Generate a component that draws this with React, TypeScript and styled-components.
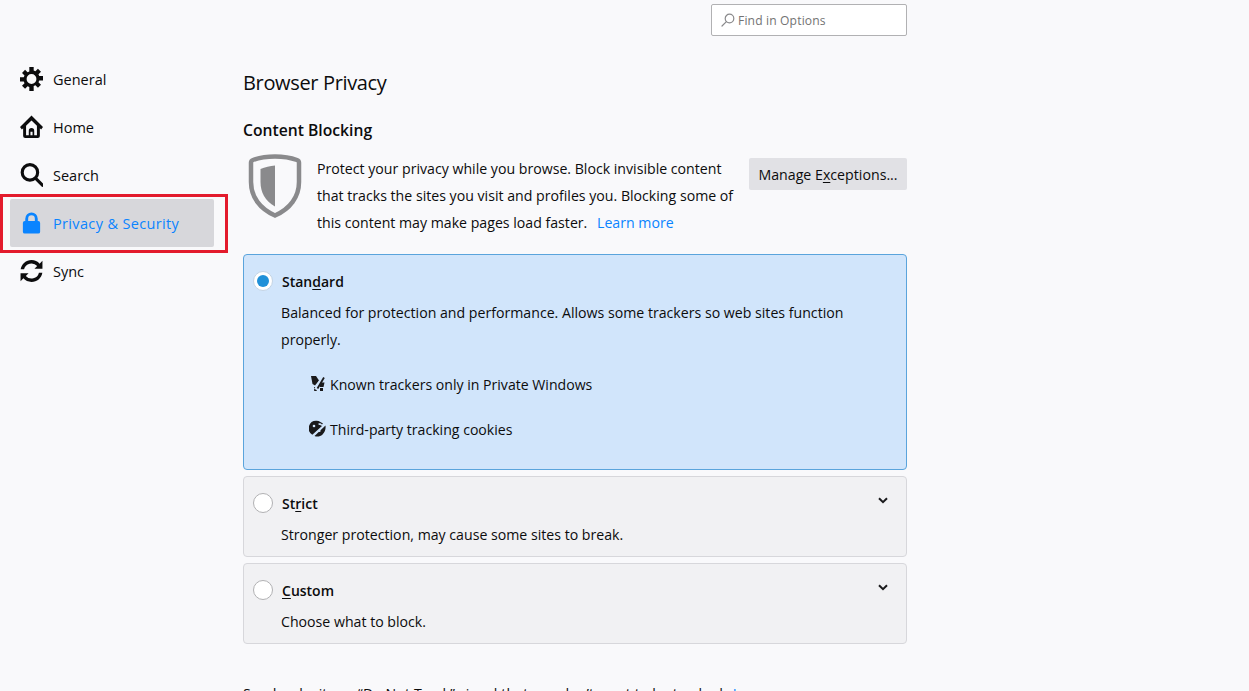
import React from "react";
import styled, { createGlobalStyle } from "styled-components";

const Global = createGlobalStyle`
  html, body { margin: 0; padding: 0; height: 691px; overflow: hidden; background: #f9f9fb; }
  body { font-family: "Open Sans", "Noto Sans", sans-serif; font-size: 14px; color: #0c0c0d; }
  u { text-underline-offset: 2px; }
`;

const Page = styled.div`
  position: relative;
  display: flex;
  height: 691px;
  overflow: hidden;
`;
const Sidebar = styled.nav`
  width: 243px;
  flex: none;
  padding: 55px 0 0 10px;
  box-sizing: border-box;
`;
const NavItem = styled.div<{ $active?: boolean }>`
  width: 204px;
  height: 48px;
  box-sizing: border-box;
  padding-left: 10px;
  display: flex;
  align-items: center;
  gap: 10px;
  border-radius: 2px;
  font-size: 14.5px;
  letter-spacing: ${(p) => (p.$active ? "0.35px" : "0")};
  background: ${(p) => (p.$active ? "#d7d7db" : "transparent")};
  color: ${(p) => (p.$active ? "#0a84ff" : "#0c0c0d")};
  & > svg { width: 23px; height: 24px; flex: none; }
`;
const Highlight = styled.div`
  position: absolute;
  left: 0;
  top: 194px;
  width: 228px;
  height: 59px;
  box-sizing: border-box;
  border: 3px solid #e31b2c;
  pointer-events: none;
`;
const Main = styled.main`
  width: 664px;
  flex: none;
  padding-top: 4px;
`;
const SearchRow = styled.div`
  display: flex;
  justify-content: flex-end;
`;
const SearchBox = styled.div`
  width: 196px;
  height: 32px;
  box-sizing: border-box;
  border: 1px solid #b1b1b3;
  border-radius: 2px;
  background: #fff;
  display: flex;
  align-items: center;
  gap: 3px;
  padding-left: 9px;
  font-size: 12.1px;
  color: #737373;
  letter-spacing: 0.15px;
`;
const Title = styled.h1`
  margin: 27px 0 0;
  font-size: 20px;
  line-height: 40px;
  font-weight: 400;
  letter-spacing: -0.35px;
  color: #0c0c0d;
`;
const Subtitle = styled.h2`
  margin: 15px 0 0;
  font-size: 15.7px;
  line-height: 24px;
  font-weight: 600;
`;
const Intro = styled.div`
  display: flex;
  margin-top: 8px;
  height: 94px;
`;
const ShieldWrap = styled.div`
  width: 74px;
  padding: 4px 0 0 5px;
  box-sizing: border-box;
  flex: none;
`;
const IntroText = styled.p`
  margin: 0;
  width: 420px;
  flex: none;
  line-height: 27px;
  font-size: 14.15px;
  padding-top: 5px;
`;
const Link = styled.a`
  color: #0a84ff;
  margin-left: 6px;
`;
const ManageBtn = styled.button`
  margin: 8px 0 0 auto;
  width: 158px;
  height: 32px;
  border: 0;
  border-radius: 2px;
  background: #e1e1e5;
  color: #0c0c0d;
  font: 400 14.2px "Open Sans", sans-serif;
  padding: 0;
  white-space: nowrap;
`;
const Card = styled.section<{ $selected?: boolean; $h: number }>`
  position: relative;
  height: ${(p) => p.$h}px;
  box-sizing: border-box;
  margin-bottom: 6px;
  border-radius: 4px;
  border: 1px solid ${(p) => (p.$selected ? "#5aa4dc" : "#d7d7db")};
  background: ${(p) => (p.$selected ? "#d1e5fb" : "#f1f1f3")};
  padding: 13px 9px 0;
`;
const CardsWrap = styled.div`
  margin-top: 10px;
`;
const CardHead = styled.div`
  display: flex;
  align-items: center;
  gap: 9px;
  height: 26px;
  font-weight: 600;
  font-size: 14px;
`;
const Radio = styled.span<{ $on?: boolean }>`
  width: 20px;
  height: 20px;
  box-sizing: border-box;
  border-radius: 50%;
  background: #fff;
  border: 1px solid ${(p) => (p.$on ? "#c4d4e4" : "#b1b1b3")};
  display: flex;
  align-items: center;
  justify-content: center;
  flex: none;
  &::after {
    content: "";
    display: ${(p) => (p.$on ? "block" : "none")};
    width: 12px;
    height: 12px;
    border-radius: 50%;
    background: #1f90d8;
  }
`;
const CardDesc = styled.p`
  margin: 5px 0 0 28px;
  line-height: 27px;
  font-size: 14.15px;
`;
const Chevron = styled.svg`
  position: absolute;
  right: 18px;
  top: 20px;
  width: 10px;
  height: 7px;
`;
const BlockList = styled.div`
  margin: 18px 0 0 56px;
  display: flex;
  flex-direction: column;
  gap: 18px;
`;
const BlockItem = styled.div`
  display: flex;
  align-items: center;
  gap: 4px;
  height: 27px;
  font-size: 14.1px;
  & > svg { width: 17px; height: 17px; flex: none; margin-top: -3px; }
`;
const Footer = styled.p`
  margin: 36px 0 0;
  white-space: nowrap;
  line-height: 27px;
  font-size: 14.15px;
  letter-spacing: 0.1px;
`;

const Gear = () => (
  <svg viewBox="1.500 1 21 22" fill="#0c0c0d">
    <path fillRule="evenodd" d="M10 1h4v3.200l1.600.7 2.300-2.300 2.800 2.800-2.300 2.300.7 1.600H23v4h-3.900l-.7 1.600 2.300 2.300-2.800 2.800-2.300-2.300-1.600.7V23h-4v-3.600l-1.600-.7-2.300 2.300-2.800-2.800 2.300-2.300-.7-1.600H1v-4h3.900l.7-1.600-2.300-2.300 2.800-2.800 2.300 2.300 1.600-.7zM12 7.500a4.500 4.500 0 1 0 0 9 4.500 4.500 0 0 0 0-9z" />
  </svg>
);
const Home = () => (
  <svg viewBox="1 1.500 22 22" fill="#0c0c0d">
    <path fillRule="evenodd" d="M12 1.500 1 12.500 2.800 14.800 4 13.600V21a2 2 0 0 0 2 2h12a2 2 0 0 0 2-2v-7.400l1.200 1.200L23 12.500zM12 6.200 6.800 11.400V20.400h2.600V16a2.600 2.600 0 0 1 5.200 0v4.400h2.600V11.400zM11 17h2v3.400h-2z" />
  </svg>
);
const Search = () => (
  <svg viewBox="1 1 22 23" fill="none" stroke="#0c0c0d" strokeWidth="3" strokeLinecap="round">
    <circle cx="10.500" cy="10" r="7.400" />
    <path d="m16 15.800 6.500 6.500" />
  </svg>
);
const Lock = () => (
  <svg viewBox="0 0 24 24" fill="#0a84ff">
    <path fillRule="evenodd" d="M12 1a6.500 6.500 0 0 0-6.500 6.500V10H5a2 2 0 0 0-2 2v9a2 2 0 0 0 2 2h14a2 2 0 0 0 2-2v-9a2 2 0 0 0-2-2h-.5V7.500A6.500 6.500 0 0 0 12 1zm0 3a3.500 3.500 0 0 1 3.500 3.500V10h-7V7.500A3.500 3.500 0 0 1 12 4z" />
  </svg>
);
const Sync = () => (
  <svg viewBox="1.500 1.500 21 21" fill="#0c0c0d">
    <path d="M12 2c3 0 5.600 1.300 7.400 3.300L22 2.700V10h-7.300l2.500-2.500A7 7 0 0 0 5.200 10.500H2.100C2.900 5.700 7 2 12 2z" />
    <path d="M12 22c-3 0-5.600-1.300-7.400-3.300L2 21.300V14h7.300l-2.500 2.500a7 7 0 0 0 12-3h3.100C21.100 18.300 17 22 12 22z" />
  </svg>
);
const Shield = () => (
  <svg width="54" height="64" viewBox="0 0 54 64">
    <path d="M27 2.500c8 0 16 1.300 22 3.500a3 3 0 0 1 2 3v19c0 15-9 27-24 33.500C12 55 3 43 3 28V9a3 3 0 0 1 2-3c6-2.200 14-3.500 22-3.500z" fill="none" stroke="#8a8a8c" strokeWidth="4.500" />
    <path d="M27 11.500v41C17 47 12.500 38 12.500 28V15c4.500-2 9.500-3 14.500-3.500z" fill="#8a8a8c" />
  </svg>
);
const TrackerIcon = () => (
  <svg viewBox="0 0 17 17" fill="#1a1a1c">
    <path d="M2 1h5l3 4.500-4 5-2.500-1.500z" />
    <path d="M5 12h3.200l-.5 4H5.200z" />
    <path d="M10.500 7.500h5L14.500 12h-3.500z" />
    <path d="M11 13h3v3h-3z" />
    <path d="M6.500 14.500 14.500 1" stroke="#d1e5fb" strokeWidth="3.200" fill="none" />
    <path d="M8.500 13.500 15 2.500" stroke="#1a1a1c" strokeWidth="1.800" fill="none" />
  </svg>
);
const CookieIcon = () => (
  <svg viewBox="0 0 17 17" fill="#1a1a1c">
    <path d="M7.500.8c1.500 0 2.800.4 3.900 1.200L14 3.500l-1 .9C12 3 10 3 9.500 3.500 9 4.500 10 5 11 5l2 1-9.700 8.700A7.500 7.500 0 0 1 7.500.8z" />
    <path d="M16.500 5.500c.4 3.200-.4 6.500-3 9-2.300 2.200-5.500 2.600-8 1.500z" />
    <circle cx="5" cy="6" r="1.300" fill="#d1e5fb" />
    <circle cx="10.500" cy="11" r="1.100" fill="#d1e5fb" />
  </svg>
);
const ChevronIcon = () => (
  <Chevron viewBox="0 0 10 7">
    <path d="M1 1.200 5 5.200 9 1.200" fill="none" stroke="#1a1a1c" strokeWidth="2" />
  </Chevron>
);

export default function App() {
  return (
    <Page>
      <Global />
      <Sidebar>
        <NavItem><Gear />General</NavItem>
        <NavItem><Home />Home</NavItem>
        <NavItem><Search />Search</NavItem>
        <NavItem $active><Lock />Privacy &amp; Security</NavItem>
        <NavItem><Sync />Sync</NavItem>
      </Sidebar>
      <Main>
        <SearchRow>
          <SearchBox>
            <svg width="14" height="14" viewBox="0 0 14 14" fill="none" stroke="#8a8a8c" strokeWidth="1.200">
              <circle cx="8.500" cy="5.500" r="4.300" />
              <path d="M5.400 8.600 1 13" strokeLinecap="round" />
            </svg>
            Find in Options
          </SearchBox>
        </SearchRow>
        <Title>Browser Privacy</Title>
        <Subtitle>Content Blocking</Subtitle>
        <Intro>
          <ShieldWrap><Shield /></ShieldWrap>
          <IntroText>
            Protect your privacy while you browse. Block invisible content that tracks the sites you visit and profiles you. Blocking some of this content may make pages load faster.
            <Link> Learn more</Link>
          </IntroText>
          <ManageBtn>Manage E<u>x</u>ceptions...</ManageBtn>
        </Intro>
        <CardsWrap>
          <Card $selected $h={216}>
            <CardHead><Radio $on /><span>Stan<u>d</u>ard</span></CardHead>
            <CardDesc>Balanced for protection and performance. Allows some trackers so web sites function properly.</CardDesc>
            <BlockList>
              <BlockItem><TrackerIcon />Known trackers only in Private Windows</BlockItem>
              <BlockItem><CookieIcon />Third-party tracking cookies</BlockItem>
            </BlockList>
          </Card>
          <Card $h={81}>
            <CardHead><Radio /><span>St<u>r</u>ict</span></CardHead>
            <CardDesc>Stronger protection, may cause some sites to break.</CardDesc>
            <ChevronIcon />
          </Card>
          <Card $h={81}>
            <CardHead><Radio /><span><u>C</u>ustom</span></CardHead>
            <CardDesc>Choose what to block.</CardDesc>
            <ChevronIcon />
          </Card>
        </CardsWrap>
        <Footer>Send web sites a “Do Not Track” signal that you don’t want to be tracked<Link> Learn more</Link></Footer>
      </Main>
      <Highlight />
    </Page>
  );
}
